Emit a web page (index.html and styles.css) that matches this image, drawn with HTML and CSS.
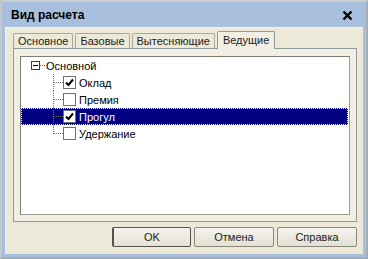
FILE: index.html
```html
<!DOCTYPE html>
<html lang="ru">
<head>
  <meta charset="UTF-8" />
  <title>Вид расчета</title>
  <link rel="stylesheet" href="styles.css">
</head>
<body>

  <div class="window">
    <!-- ЗАГОЛОВОК -->
    <div class="titlebar">
      <span class="title">Вид расчета</span>
      <span class="close">
        <svg width="11" height="11" viewBox="0 0 11 11"><path d="M1.5 1.5 L9.5 9.5 M9.5 1.5 L1.5 9.5" stroke="#000" stroke-width="2.4"/></svg>
      </span>
    </div>

    <div class="content">
      <!-- ЗАКЛАДКИ -->
      <div class="tabs">
        <div class="tab">Основное</div>
        <div class="tab">Базовые</div>
        <div class="tab">Вытесняющие</div>
        <div class="tab active">Ведущие</div>
      </div>

      <div class="panel">
        <div class="tree">
          <div class="row root">
            <span class="expander"><span class="minus"></span></span>
            <span class="hline"></span>
            <span class="label">Основной</span>
          </div>
          <div class="children">
            <div class="row child">
              <span class="check on"><svg width="9" height="9" viewBox="0 0 9 9"><path d="M1 4.5 L3.5 7 L8 1.5" fill="none" stroke="#000" stroke-width="2"/></svg></span>
              <span class="label">Оклад</span>
            </div>
            <div class="row child">
              <span class="check"></span>
              <span class="label">Премия</span>
            </div>
            <div class="row child selected">
              <span class="check on"><svg width="9" height="9" viewBox="0 0 9 9"><path d="M1 4.5 L3.5 7 L8 1.5" fill="none" stroke="#000" stroke-width="2"/></svg></span>
              <span class="label">Прогул</span>
            </div>
            <div class="row child last">
              <span class="check"></span>
              <span class="label">Удержание</span>
            </div>
          </div>
        </div>
      </div>

      <!-- КНОПКИ -->
      <div class="buttons">
        <button class="btn default">OK</button>
        <button class="btn">Отмена</button>
        <button class="btn">Справка</button>
      </div>
    </div>
  </div>

</body>
</html>
```

FILE: styles.css
```css
body {
  margin: 0;
  font-family: 'Liberation Sans', Arial, sans-serif;
  font-size: 11px;
  background: #fff;
}

.window {
  width: 368px;
  height: 259px;
  box-sizing: border-box;
  border: 2px solid #a9acb1;
  border-top-color: #c9ccd0;
  border-left-color: #c4c7cc;
  background: #a8bfdd;
  padding: 0 3px 3px 3px;
  display: flex;
  flex-direction: column;
}

.titlebar {
  height: 25px;
  display: flex;
  align-items: center;
  justify-content: space-between;
  padding: 0 10px 0 6px;
}

.title {
  font-size: 12px;
  font-weight: bold;
  color: #000;
}

.close {
  display: flex;
  margin-top: 1px;
}

.content {
  flex: 1;
  background: #ece9d8;
  border-left: 1px solid #f5f4ee;
  border-top: 1px solid #f5f4ee;
  padding: 3px 6px 0 7px;
  display: flex;
  flex-direction: column;
}

.tabs {
  display: flex;
  align-items: flex-end;
  height: 17px;
  gap: 2px;
}

.tab {
  height: 15px;
  line-height: 14px;
  padding: 0 4px;
  box-sizing: border-box;
  border: 1px solid #aca899;
  border-bottom: none;
  border-radius: 2px 2px 0 0;
  background: #ece9d8;
  color: #222;
}

.tab.active {
  height: 18px;
  line-height: 17px;
  margin-bottom: -1px;
  padding: 0 5px;
  background: #f1efe4;
  border-color: #919b9c;
  position: relative;
  z-index: 1;
}

.panel {
  height: 174px;
  box-sizing: border-box;
  border: 1px solid #919b9c;
  background: #f1efe4;
  padding: 7px 6px 6px 6px;
}

.tree {
  height: 100%;
  box-sizing: border-box;
  background: #fff;
  border: 1px solid #7f7d73;
  border-right-color: #9d9a8e;
  border-bottom-color: #9d9a8e;
}

.row {
  height: 17px;
  display: flex;
  align-items: center;
  position: relative;
  color: #000;
}

.root {
  padding-left: 10px;
}

.expander {
  width: 9px;
  height: 9px;
  box-sizing: border-box;
  border: 1px solid #3c3c3c;
  background: #fff;
  display: flex;
  align-items: center;
  justify-content: center;
}

.minus {
  width: 5px;
  height: 1px;
  background: #000;
}

.hline {
  width: 5px;
  border-top: 1px dotted #6e6e6e;
}

.child {
  padding-left: 42px;
}

/* линии дерева */
.child::before {
  content: "";
  position: absolute;
  left: 32px;
  top: 0;
  height: 17px;
  border-left: 1px dotted #6e6e6e;
}

.child.last::before {
  height: 9px;
}

.child::after {
  content: "";
  position: absolute;
  left: 33px;
  top: 8px;
  width: 9px;
  border-top: 1px dotted #6e6e6e;
}

.check {
  width: 13px;
  height: 13px;
  box-sizing: border-box;
  border: 1px solid #707070;
  background: #fff;
  display: flex;
  align-items: center;
  justify-content: center;
}

.label {
  margin-left: 3px;
}

.root .label {
  margin-left: 1px;
}

.selected {
  background: #000080;
  outline: 1px dotted #fff;
  outline-offset: -1px;
  margin-right: 1px;
}

.selected .label {
  color: #fff;
}

.buttons {
  display: flex;
  justify-content: flex-end;
  gap: 3px;
  margin-top: 5px;
}

.btn {
  width: 80px;
  height: 20px;
  font-family: 'Liberation Sans', Arial, sans-serif;
  font-size: 11px;
  font-weight: normal;
  color: #222;
  background: linear-gradient(#f4f3ee, #e3e0d3);
  border: 1px solid #8a877b;
  border-radius: 2px;
  padding: 0;
}

.btn.default {
  border: 1px solid #55534c;
  border-left-width: 2px;
  width: 79px;
}
```
